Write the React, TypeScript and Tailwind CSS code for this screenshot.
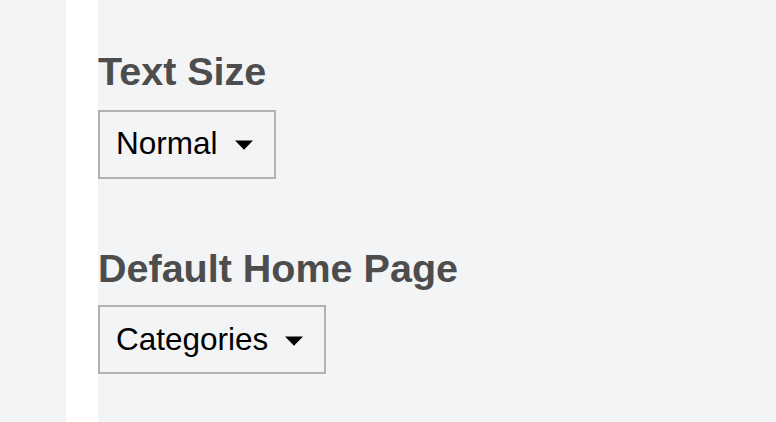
import React from 'react';

function Dropdown({ label }: { label: string }) {
  return (
    <button className="flex items-center h-[69px] pl-[16px] pr-[21px] border-2 border-[#b1b1b1] bg-transparent text-black text-[31.5px] leading-none">
      <span>{label}</span>
      <svg width="18" height="10" viewBox="0 0 18 10" className="ml-[17px] mt-[2px]">
        <path d="M0 0.5 L18 0.5 L9 9.8 Z" fill="#000" />
      </svg>
    </button>
  );
}

export default function App() {
  return (
    <div className="flex h-screen w-full bg-[#f3f4f6] font-['Liberation_Sans',Arial,sans-serif]">
      <div className="w-[66px] shrink-0 bg-[#f3f4f6]" />
      <div className="w-[32px] shrink-0 bg-white" />
      <main className="flex-1 pt-[52px]">
        <h2 className="text-[39.5px] leading-none font-bold text-[#4d4d4d]">Text Size</h2>
        <div className="mt-[18px] flex">
          <Dropdown label="Normal" />
        </div>
        <h2 className="mt-[70px] text-[39.5px] leading-none font-bold text-[#4d4d4d]">Default Home Page</h2>
        <div className="mt-[17px] flex">
          <Dropdown label="Categories" />
        </div>
      </main>
    </div>
  );
}
